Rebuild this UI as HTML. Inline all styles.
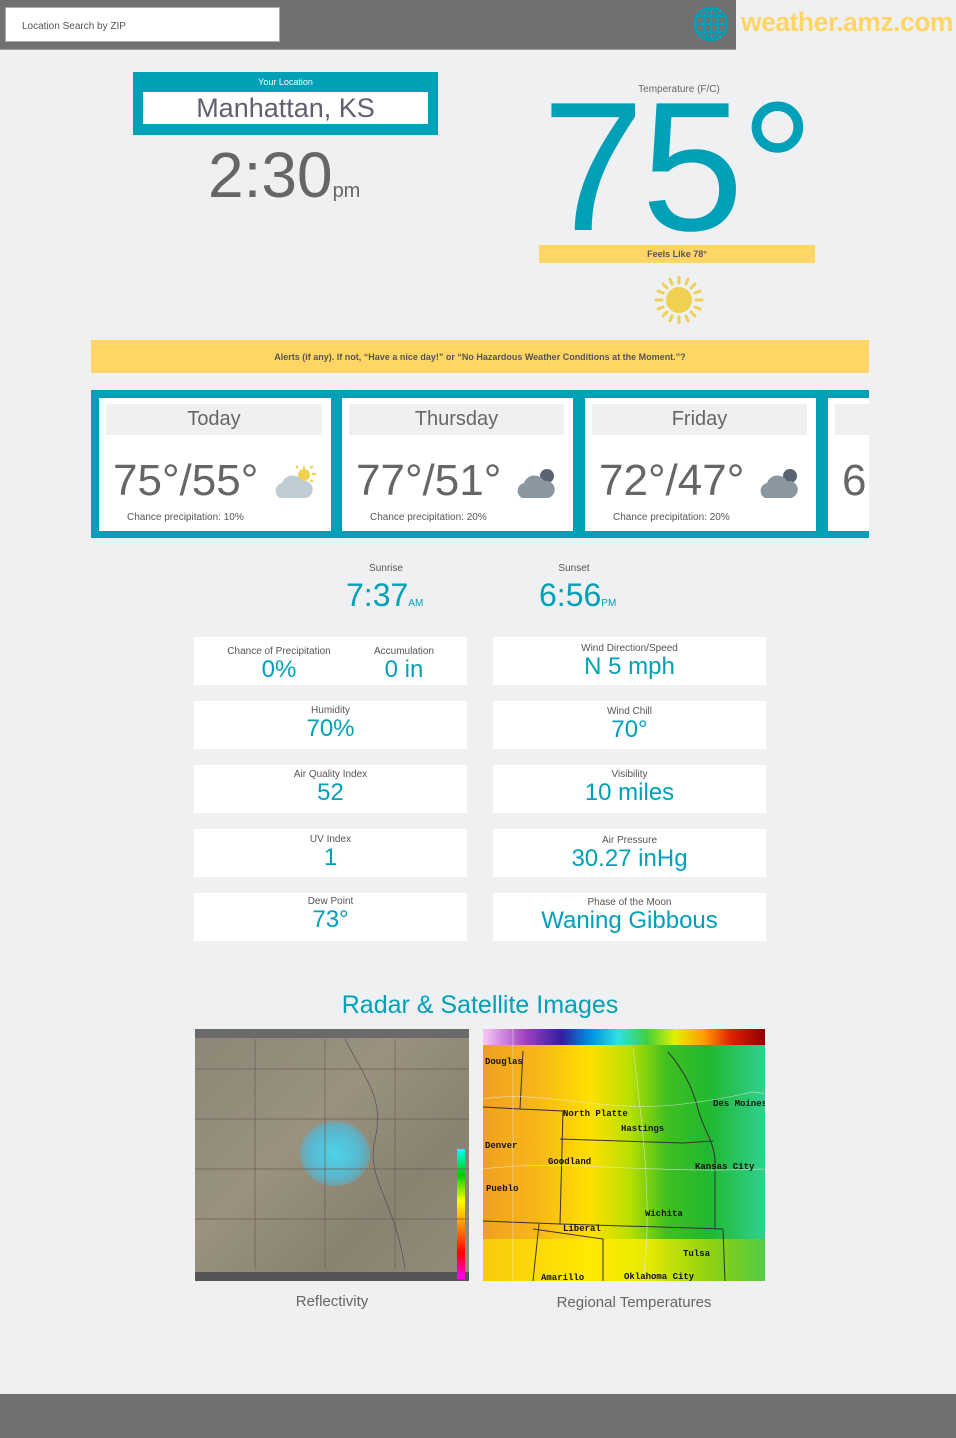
<!DOCTYPE html>
<html><head><meta charset="utf-8"><style>
*{margin:0;padding:0;box-sizing:border-box}
body{width:956px;height:1438px;background:#eff0f2;font-family:"Liberation Sans",sans-serif;position:relative;overflow:hidden;color:#666}
.a{position:absolute}
.c{text-align:center}
.t{color:#00a0b8}
.card{position:absolute;top:398px;height:133px;background:#fff}
.card .h{position:absolute;left:7px;top:6px;right:9px;height:31px;background:#eff0f2;font-size:20px;text-align:center;line-height:31px;color:#666}
.card .tp{position:absolute;left:14px;top:58px;font-size:44px;color:#666;white-space:nowrap}
.card .p{position:absolute;left:28px;top:114px;font-size:10px;color:#555}
.box{position:absolute;background:#fff;height:48px;text-align:center;width:273px}
.box .l{font-size:10px;color:#555;margin-top:9px}
.box .v{font-size:24px;color:#00a0b8;line-height:26px}
.mt{font-family:"Liberation Mono",monospace;font-weight:bold;font-size:9px;color:#111;position:absolute;white-space:nowrap}
</style></head><body>
<div class="a" style="left:0;top:0;width:736px;height:50px;background:#707070;border-bottom:1px solid #999"></div>
<div class="a" style="left:5px;top:7px;width:275px;height:35px;background:#fff;border:1px solid #aaa;font-size:10px;color:#555;padding:13px 0 0 16px">Location Search by ZIP</div>
<svg class="a" style="left:693px;top:6px" width="36" height="36" viewBox="0 0 36 36" fill="none" stroke="#00a0b8" stroke-width="2.5"><circle cx="18" cy="18" r="16"/><ellipse cx="18" cy="18" rx="7" ry="16"/><line x1="18" y1="2" x2="18" y2="34"/><line x1="2" y1="18" x2="34" y2="18"/><line x1="5" y1="10" x2="31" y2="10"/><line x1="5" y1="26" x2="31" y2="26"/></svg>
<div class="a" style="left:741px;top:7px;font-size:26.5px;color:#ffd666;font-weight:bold;letter-spacing:-0.5px;white-space:nowrap">weather.amz.com</div>

<div class="a" style="left:133px;top:72px;width:305px;height:63px;background:#00a0b8"></div>
<div class="a c" style="left:133px;top:77px;width:305px;font-size:9px;color:#fff">Your Location</div>
<div class="a c" style="left:143px;top:92px;width:285px;height:32px;background:#fff;font-size:27px;color:#606070;line-height:32px">Manhattan, KS</div>
<div class="a" style="left:208px;top:138px;font-size:64px;color:#666;white-space:nowrap">2:30<span style="font-size:20px">pm</span></div>

<div class="a c" style="left:579px;top:84px;width:200px;font-size:10px;color:#666">Temperature (F/C)</div>
<div class="a t" style="left:542px;top:74px;font-size:184px;line-height:184px;white-space:nowrap;letter-spacing:-3px">75°</div>
<div class="a c" style="left:539px;top:245px;width:276px;height:18px;background:#ffd666;font-size:9px;font-weight:bold;color:#555;line-height:19px">Feels Like 78°</div>
<svg class="a" style="left:654px;top:275px" width="50" height="50" viewBox="0 0 50 50"><g stroke="#f0d050" stroke-width="3" stroke-linecap="round"><line x1="25" y1="2" x2="25" y2="8"/><line x1="25" y1="42" x2="25" y2="48"/><line x1="2" y1="25" x2="8" y2="25"/><line x1="42" y1="25" x2="48" y2="25"/><line x1="9" y1="9" x2="13" y2="13"/><line x1="37" y1="37" x2="41" y2="41"/><line x1="9" y1="41" x2="13" y2="37"/><line x1="37" y1="13" x2="41" y2="9"/><line x1="16" y1="4" x2="18" y2="9"/><line x1="34" y1="4" x2="32" y2="9"/><line x1="16" y1="46" x2="18" y2="41"/><line x1="34" y1="46" x2="32" y2="41"/><line x1="4" y1="16" x2="9" y2="18"/><line x1="4" y1="34" x2="9" y2="32"/><line x1="46" y1="16" x2="41" y2="18"/><line x1="46" y1="34" x2="41" y2="32"/></g><circle cx="25" cy="25" r="13" fill="#f0d050"/></svg>

<div class="a c" style="left:91px;top:340px;width:778px;height:33px;background:#ffd666;font-size:9px;font-weight:bold;color:#555;line-height:34px">Alerts (if any). If not, “Have a nice day!” or “No Hazardous Weather Conditions at the Moment.”?</div>

<div class="a" style="left:91px;top:390px;width:778px;height:148px;background:#00a0b8"></div>
<div class="a" style="left:91px;top:390px;width:778px;height:148px;overflow:hidden">
<div class="card" style="left:8px;top:8px;width:232px"><div class="h">Today</div><div class="tp">75°/55°</div><div class="p">Chance precipitation: 10%</div>
<svg class="a" style="left:173px;top:66px" width="45" height="35" viewBox="0 0 45 35"><g stroke="#f0d050" stroke-width="2"><line x1="32" y1="2" x2="32" y2="6"/><line x1="40" y1="10" x2="44" y2="10"/><line x1="38" y1="4" x2="41" y2="2"/><line x1="26" y1="4" x2="24" y2="2"/><line x1="38" y1="16" x2="41" y2="18"/></g><circle cx="32" cy="11" r="6" fill="#f0d050"/><path d="M8 34 A8 8 0 0 1 10 19 A11 11 0 0 1 30 17 A8.5 8.5 0 0 1 34 34 Z" fill="#c0ccd4"/></svg></div>
<div class="card" style="left:251px;top:8px;width:231px"><div class="h">Thursday</div><div class="tp">77°/51°</div><div class="p">Chance precipitation: 20%</div>
<svg class="a" style="left:172px;top:66px" width="45" height="35" viewBox="0 0 45 35"><circle cx="33" cy="12" r="7" fill="#5a6470"/><path d="M8 34 A8 8 0 0 1 10 19 A11 11 0 0 1 30 17 A8.5 8.5 0 0 1 34 34 Z" fill="#8a96a0"/></svg></div>
<div class="card" style="left:494px;top:8px;width:231px"><div class="h">Friday</div><div class="tp">72°/47°</div><div class="p">Chance precipitation: 20%</div>
<svg class="a" style="left:172px;top:66px" width="45" height="35" viewBox="0 0 45 35"><circle cx="33" cy="12" r="7" fill="#5a6470"/><path d="M8 34 A8 8 0 0 1 10 19 A11 11 0 0 1 30 17 A8.5 8.5 0 0 1 34 34 Z" fill="#8a96a0"/></svg></div>
<div class="card" style="left:737px;top:8px;width:231px"><div class="h"></div><div class="tp">6</div></div>
</div>

<div class="a c" style="left:336px;top:563px;width:100px;font-size:10px;color:#555">Sunrise</div>
<div class="a t" style="left:346px;top:577px;font-size:32px;white-space:nowrap">7:37<span style="font-size:10px">AM</span></div>
<div class="a c" style="left:524px;top:563px;width:100px;font-size:10px;color:#555">Sunset</div>
<div class="a t" style="left:539px;top:577px;font-size:32px;white-space:nowrap">6:56<span style="font-size:10px">PM</span></div>

<div class="box" style="left:194px;top:637px">
 <div class="a" style="left:0;width:170px"><div class="l">Chance of Precipitation</div><div class="v">0%</div></div>
 <div class="a" style="left:160px;width:100px"><div class="l">Accumulation</div><div class="v">0 in</div></div>
</div>
<div class="box" style="left:493px;top:637px"><div class="l" style="margin-top:6px">Wind Direction/Speed</div><div class="v">N 5 mph</div></div>
<div class="box" style="left:194px;top:701px"><div class="l" style="margin-top:4px">Humidity</div><div class="v">70%</div></div>
<div class="box" style="left:493px;top:701px"><div class="l" style="margin-top:5px">Wind Chill</div><div class="v">70°</div></div>
<div class="box" style="left:194px;top:765px"><div class="l" style="margin-top:4px">Air Quality Index</div><div class="v">52</div></div>
<div class="box" style="left:493px;top:765px"><div class="l" style="margin-top:4px">Visibility</div><div class="v">10 miles</div></div>
<div class="box" style="left:194px;top:829px"><div class="l" style="margin-top:5px">UV Index</div><div class="v">1</div></div>
<div class="box" style="left:493px;top:829px"><div class="l" style="margin-top:6px">Air Pressure</div><div class="v">30.27 inHg</div></div>
<div class="box" style="left:194px;top:893px"><div class="l" style="margin-top:3px">Dew Point</div><div class="v">73°</div></div>
<div class="box" style="left:493px;top:893px"><div class="l" style="margin-top:4px">Phase of the Moon</div><div class="v">Waning Gibbous</div></div>

<div class="a c t" style="left:280px;top:991px;width:400px;font-size:25px">Radar &amp; Satellite Images</div>

<div class="a" style="left:195px;top:1029px;width:274px;height:252px;background:linear-gradient(135deg,#8c8676,#9a927f 40%,#888270 70%,#948c7a);overflow:hidden">
 <div class="a" style="left:0;top:0;width:274px;height:9px;background:#6a6a6a"></div>
 <div class="a" style="left:0;bottom:0;width:274px;height:9px;background:#555"></div>
 <div class="a" style="left:262px;top:120px;width:8px;height:130px;background:linear-gradient(#0ff,#0c0,#ff0,#f80,#f00,#f0f)"></div>
 <div class="a" style="left:105px;top:92px;width:70px;height:65px;border-radius:50%;background:radial-gradient(#4cd4e8,#58b8d0 50%,rgba(90,170,200,0.3) 80%,transparent)"></div>
 <svg class="a" style="left:0;top:0" width="274" height="252"><g fill="none" stroke="#6c5e58" stroke-width="0.7"><path d="M0 40 H274 M0 90 H274 M0 140 H274 M0 190 H274 M60 10 V240 M130 10 V240 M200 10 V240"/><path d="M150 10 C170 50 190 70 180 110 S200 170 210 240" stroke="#5a4d55"/></g></svg>
</div>
<div class="a" style="left:483px;top:1029px;width:282px;height:252px;overflow:hidden;background:linear-gradient(90deg,#f0a020 0%,#f8b818 20%,#ffe000 38%,#b8e000 52%,#40c020 65%,#20b830 80%,#30d090 100%)">
 <div class="a" style="left:0;top:0;width:282px;height:16px;background:linear-gradient(90deg,#f8c8f8,#a040c0 15%,#3020a0 28%,#0090e0 38%,#30e0e0 48%,#40d040 58%,#e0f000 68%,#ffa000 78%,#e02000 88%,#900000)"></div>
 <div class="a" style="left:0;top:210px;width:282px;height:42px;background:linear-gradient(90deg,rgba(255,230,0,.6),rgba(255,240,0,.8) 60%,rgba(120,200,0,.5))"></div>
 <svg class="a" style="left:0;top:0" width="282" height="252"><g fill="none" stroke="#333" stroke-width="1"><path d="M40 22 L37 80 L0 78 M37 80 L80 82 L77 195 L0 192 M77 110 L200 114 M77 195 L240 200 M240 200 L242 252 M200 114 L230 112 M56 195 L50 252 M50 200 L120 210 L120 252"/><path d="M185 23 C200 40 210 60 215 80 C220 100 230 110 232 130 V200" /></g><g fill="none" stroke="#e8e8e8" stroke-width="0.6" opacity=".8"><path d="M0 70 C60 60 120 85 200 75 S260 60 282 65 M0 140 C80 130 160 145 282 140 M30 0 V252 M150 20 C160 100 170 180 160 252"/></g></svg>
 <div class="mt" style="left:2px;top:28px">Douglas</div><div class="mt" style="left:80px;top:80px">North Platte</div><div class="mt" style="left:138px;top:95px">Hastings</div><div class="mt" style="left:230px;top:70px">Des Moines</div><div class="mt" style="left:2px;top:112px">Denver</div><div class="mt" style="left:65px;top:128px">Goodland</div><div class="mt" style="left:212px;top:133px">Kansas City</div><div class="mt" style="left:3px;top:155px">Pueblo</div><div class="mt" style="left:162px;top:180px">Wichita</div><div class="mt" style="left:80px;top:195px">Liberal</div><div class="mt" style="left:200px;top:220px">Tulsa</div><div class="mt" style="left:58px;top:244px">Amarillo</div><div class="mt" style="left:141px;top:243px">Oklahoma City</div>
</div>
<div class="a c" style="left:195px;top:1293px;width:274px;font-size:15px;color:#666">Reflectivity</div>
<div class="a c" style="left:483px;top:1294px;width:302px;font-size:15px;color:#666">Regional Temperatures</div>

<div class="a" style="left:0;top:1394px;width:956px;height:44px;background:#707070"></div>
</body></html>
